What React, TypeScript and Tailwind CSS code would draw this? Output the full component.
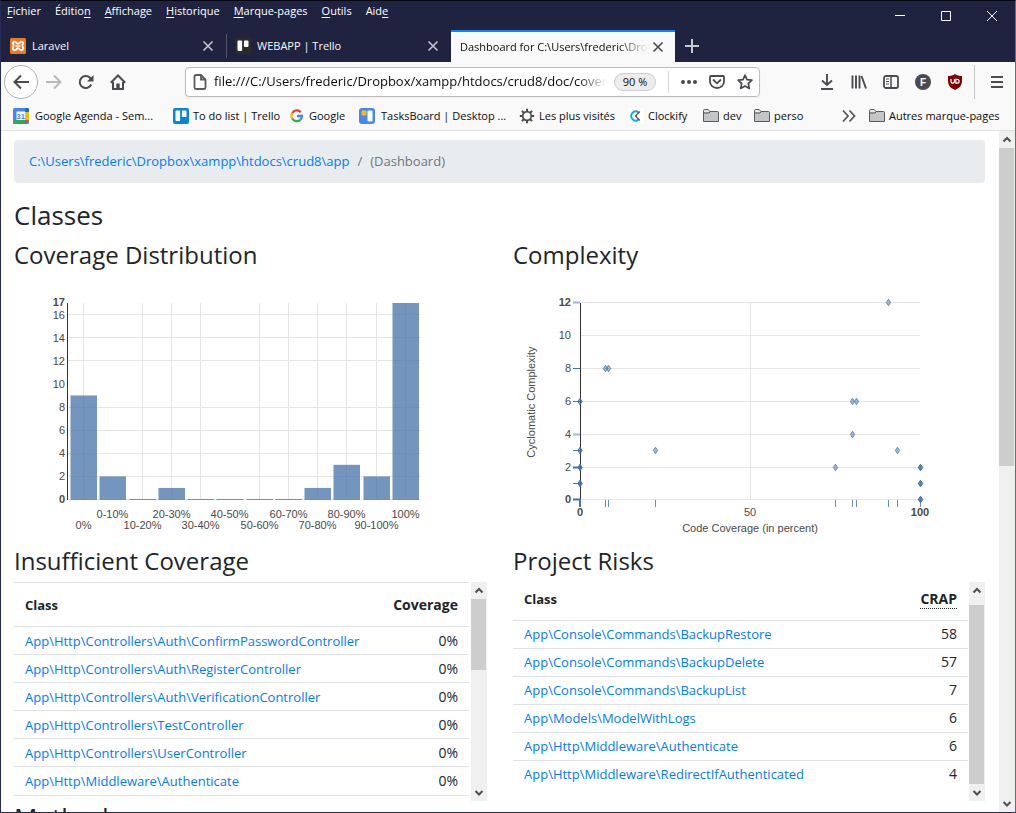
import React from "react";

const menus: [string, string, string][] = [
  ["", "F", "ichier"],
  ["Éditio", "n", ""],
  ["", "A", "ffichage"],
  ["", "H", "istorique"],
  ["", "M", "arque-pages"],
  ["", "O", "utils"],
  ["Aid", "e", ""],
];

function CloseIcon() {
  return (
    <svg className="h-3 w-3" viewBox="0 0 12 12" fill="none" stroke="currentColor" strokeWidth="1.6">
      <path d="M1.5 1.5 10.5 10.5M10.5 1.5 1.5 10.5" />
    </svg>
  );
}

function XamppIcon() {
  return (
    <svg className="h-4 w-4 shrink-0" viewBox="0 0 16 16">
      <rect width="16" height="16" rx="1.5" fill="#f37623" />
      <path
        d="M4.800 3.800C3 3.800 2.500 5 3.300 6.300c.6 1 .6 1.500 0 2.500C2.300 10.500 3 12.200 4.800 12.200c1.700 0 1.700-2 3.200-2s1.500 2 3.200 2c1.800 0 2.500-1.700 1.500-3.400-.6-1-.6-1.500 0-2.500.8-1.300.3-2.500-1.500-2.500C9.700 3.800 9.700 5.800 8 5.800S6.300 3.800 4.800 3.800z"
        fill="none"
        stroke="#fff"
        strokeWidth="1.900"
      />
      <path d="M5.500 8h5" stroke="#fff" strokeWidth="1.400" />
    </svg>
  );
}

function TrelloIcon({ dark = false }: { dark?: boolean }) {
  return (
    <svg className="h-4 w-4 shrink-0" viewBox="0 0 16 16">
      <rect width="16" height="16" rx="2" fill={dark ? "#2b2b2b" : "#0b86d4"} />
      <rect x="2.500" y="2.500" width="4.600" height="10.500" rx="1" fill="#fff" />
      <rect x="8.900" y="2.500" width="4.600" height="6.500" rx="1" fill="#fff" />
    </svg>
  );
}

function Folder() {
  return (
    <svg className="h-4 w-4 shrink-0" viewBox="0 0 16 16">
      <path d="M.5 13.500v-11a1 1 0 0 1 1-1h3.700l1.600 2h7.700a1 1 0 0 1 1 1v9z" fill="#c4c5c6" stroke="#5a5a5c" />
      <path d="M1 2h4l1.200 2H1z" fill="#e8e8e8" />
      <path d="M1 5h5l1.500-1.500" fill="none" stroke="#5a5a5c" />
    </svg>
  );
}

function AgendaIcon() {
  return (
    <svg className="h-4 w-4 shrink-0" viewBox="0 0 16 16">
      <rect width="16" height="16" rx="1.500" fill="#4285f4" />
      <path d="M12 0h2.500A1.500 1.500 0 0 1 16 1.500V4h-4z" fill="#1967d2" />
      <path d="M12 4h4v8h-4z" fill="#fbbc04" />
      <path d="M0 12h12v4H1.500A1.500 1.500 0 0 1 0 14.500z" fill="#34a853" />
      <path d="M12 12h4l-4 4z" fill="#ea4335" />
      <path d="M3.500 3.500h8.500V12H3.500z" fill="#fff" />
      <text x="7.700" y="10.600" textAnchor="middle" fontSize="7.500" fontWeight="700" fill="#4285f4" fontFamily="Liberation Sans, sans-serif">31</text>
    </svg>
  );
}

function GoogleIcon() {
  return (
    <svg className="h-4 w-4 shrink-0" viewBox="0 0 16 16" fill="none" strokeWidth="2.300">
      <path d="M3.300 5A5 5 0 0 1 11.700 4.300" stroke="#ea4335" />
      <path d="M3.300 10.500a5 5 0 0 1 0-5.500" stroke="#fbbc04" />
      <path d="M11.300 11.700a5 5 0 0 1-8-1.200" stroke="#34a853" />
      <path d="M8 8h5a5 5 0 0 1-1.700 3.700" stroke="#4285f4" />
    </svg>
  );
}

function TasksIcon() {
  return (
    <svg className="h-4 w-4 shrink-0" viewBox="0 0 16 16">
      <rect width="16" height="16" rx="3" fill="#4688f1" />
      <rect x="2.500" y="2.500" width="5" height="5" rx="1" fill="#fbbc04" />
      <rect x="8.500" y="2.500" width="5" height="11" rx="1" fill="#fff" />
    </svg>
  );
}

function GearIcon() {
  return (
    <svg className="h-4 w-4 shrink-0" viewBox="0 0 16 16" fill="none" stroke="#4c4c4e">
      <circle cx="8" cy="8" r="4.300" strokeWidth="1.700" />
      <path
        d="M8 3.500V.8M8 15.200v-2.700M3.500 8H.8M15.200 8h-2.700M4.800 4.800 2.900 2.900M13.100 13.100l-1.900-1.900M4.800 11.200l-1.900 1.900M13.100 2.900l-1.900 1.900"
        strokeWidth="2"
      />
    </svg>
  );
}

function ClockifyIcon() {
  return (
    <svg className="h-4 w-4 shrink-0" viewBox="0 0 16 16" fill="none">
      <rect width="16" height="16" fill="#fff" />
      <path d="M10.500 4.200A4.600 4.600 0 1 0 10.500 11.800" stroke="#03a9f4" strokeWidth="1.800" />
      <path d="m8.300 7.200 3.500-3.500M8.300 8.800l3.500 3.500" stroke="#333" strokeWidth="1.100" />
      <circle cx="8" cy="8" r="1" fill="#333" />
    </svg>
  );
}

const bookmarks: { label: string; icon: React.ReactNode; box: string }[] = [
  { label: "Google Agenda - Sem...", icon: <AgendaIcon />, box: "w-[160px] gap-[6px]" },
  { label: "To do list | Trello", icon: <TrelloIcon />, box: "w-[116px] gap-1" },
  { label: "Google", icon: <GoogleIcon />, box: "w-[70px] gap-1" },
  { label: "TasksBoard | Desktop ...", icon: <TasksIcon />, box: "w-[160px] gap-[6px]" },
  { label: "Les plus visités", icon: <GearIcon />, box: "w-[109px] gap-1" },
  { label: "Clockify", icon: <ClockifyIcon />, box: "w-[75px] gap-1" },
  { label: "dev", icon: <Folder />, box: "w-[51px] gap-1" },
  { label: "perso", icon: <Folder />, box: "w-[60px] gap-1" },
];

function TitleBar() {
  return (
    <div className="flex h-[29px] shrink-0 justify-between text-white">
      <nav className="flex h-5 items-center gap-[14px] pl-[6px]">
        {menus.map(([pre, key, post]) => (
          <button key={pre + key + post} className="whitespace-nowrap text-[11px] leading-4">
            {pre}
            <span className="underline underline-offset-2">{key}</span>
            {post}
          </button>
        ))}
      </nav>
      <div className="flex">
        <button aria-label="Réduire" className="flex w-[46px] items-center justify-center">
          <svg className="h-[10px] w-[10px]" viewBox="0 0 10 10"><path d="M0 4.500h10" stroke="#fff" /></svg>
        </button>
        <button aria-label="Agrandir" className="flex w-[46px] items-center justify-center">
          <svg className="h-[10px] w-[10px]" viewBox="0 0 10 10"><path d="M.5.5h9v9h-9z" fill="none" stroke="#fff" /></svg>
        </button>
        <button aria-label="Fermer" className="flex w-[46px] items-center justify-center">
          <svg className="h-[10px] w-[10px]" viewBox="0 0 10 10"><path d="m0 0 10 10M10 0 0 10" stroke="#fff" /></svg>
        </button>
      </div>
    </div>
  );
}

function TabStrip() {
  return (
    <div className="flex h-8 shrink-0 text-[11px] text-[#f9f9fa]">
      <div className="flex w-[225px] items-center gap-[6px] pl-[9px] pr-3">
        <XamppIcon />
        <span className="grow">Laravel</span>
        <button aria-label="Fermer l’onglet" className="text-[#c5c5cc]"><CloseIcon /></button>
      </div>
      <div className="my-1 w-px bg-[#55566e]" />
      <div className="flex w-[224px] items-center gap-[6px] pl-2 pr-3">
        <TrelloIcon dark />
        <span className="grow">WEBAPP | Trello</span>
        <button aria-label="Fermer l’onglet" className="text-[#c5c5cc]"><CloseIcon /></button>
      </div>
      <div className="flex w-[224px] items-center border-t-2 border-[#0a84ff] bg-[#f9f9fa] pl-[9px] pr-[11px] text-[#0c0c0d]">
        <span className="w-0 grow overflow-hidden whitespace-nowrap [mask-image:linear-gradient(to_right,black_85%,transparent)]">
          Dashboard for C:\Users\frederic\Dro
        </span>
        <button aria-label="Fermer l’onglet" className="ml-1 text-[#4a4a4f]"><CloseIcon /></button>
      </div>
      <button aria-label="Nouvel onglet" className="ml-[10px] text-[#c9c9d0]">
        <svg className="h-[14px] w-[14px]" viewBox="0 0 14 14" stroke="currentColor" strokeWidth="2"><path d="M7 0v14M0 7h14" /></svg>
      </button>
    </div>
  );
}

const ic = "h-4 w-4";

function NavBar() {
  return (
    <div className="flex h-10 shrink-0 items-center text-[#4a4a4f]">
      <button aria-label="Précédent" className="ml-[3px] flex h-[34px] w-[34px] items-center justify-center rounded-full border border-[#b1b1b3] bg-white">
        <svg className={ic} viewBox="0 0 16 16" fill="none" stroke="currentColor" strokeWidth="2"><path d="M16 8H1.500M8 1.500 1.500 8 8 14.500" /></svg>
      </button>
      <button aria-label="Suivant" className="ml-2 text-[#b9b9bb]">
        <svg className={ic} viewBox="0 0 16 16" fill="none" stroke="currentColor" strokeWidth="2"><path d="M0 8h14.500M8 1.500 14.500 8 8 14.500" /></svg>
      </button>
      <button aria-label="Actualiser" className="ml-4">
        <svg className={ic} viewBox="0 0 16 16" fill="none" stroke="currentColor" strokeWidth="2">
          <path d="M13.200 10.500A6 6 0 1 1 12 3.800L13.500 5.500" />
          <path d="M15.500 1v6.500H9z" fill="currentColor" stroke="none" />
        </svg>
      </button>
      <button aria-label="Accueil" className="ml-4">
        <svg className={ic} viewBox="0 0 16 16" fill="none" stroke="currentColor" strokeWidth="2">
          <path d="M.8 8.700 8 1.500l7.200 7.200" />
          <path d="M3 8v7h10V8" />
          <path d="M6.300 15V9.500h3.400V15z" fill="currentColor" stroke="none" />
        </svg>
      </button>
      <div className="ml-[59px] flex h-[30px] min-w-0 grow items-center rounded-sm border border-[#bdbdbf] bg-white pl-[6px] shadow-xs">
        <svg className="h-4 w-4 shrink-0" viewBox="0 0 16 16" fill="none" stroke="#5a5a5e" strokeWidth="1.800">
          <path d="M9 1H4a1.500 1.500 0 0 0-1.500 1.500v11A1.500 1.500 0 0 0 4 15h8a1.500 1.500 0 0 0 1.500-1.500v-8z" />
          <path d="M9 1v4.500h4.500" />
        </svg>
        <input
          aria-label="Adresse"
          className="ml-[6px] w-0 grow bg-transparent text-[13px] text-[#0c0c0d] outline-none [mask-image:linear-gradient(to_right,black_93%,transparent)]"
          defaultValue="file:///C:/Users/frederic/Dropbox/xampp/htdocs/crud8/doc/coverage/dashboard.html"
        />
        <button className="ml-2 h-[18px] w-[42px] shrink-0 rounded-full border border-[#cfcfd1] bg-[#ededf0] text-[11px] leading-4 text-[#0c0c0d]">90 %</button>
        <div className="ml-3 h-[22px] w-px bg-[#d7d7db]" />
        <button aria-label="Actions" className="ml-3">
          <svg className={ic} viewBox="0 0 16 16" fill="currentColor"><circle cx="2" cy="8" r="2" /><circle cx="8" cy="8" r="2" /><circle cx="14" cy="8" r="2" /></svg>
        </button>
        <button aria-label="Pocket" className="ml-3">
          <svg className={ic} viewBox="0 0 16 16" fill="none" stroke="currentColor" strokeWidth="1.800">
            <path d="M2 2h12a1 1 0 0 1 1 1v4.500a7 6.500 0 0 1-14 0V3a1 1 0 0 1 1-1z" />
            <path d="m4.500 6 3.500 3.300L11.500 6" strokeLinecap="round" />
          </svg>
        </button>
        <button aria-label="Marquer cette page" className="ml-3 mr-[6px]">
          <svg className={ic} viewBox="0 0 16 16" fill="none" stroke="currentColor" strokeWidth="1.700" strokeLinejoin="round">
            <path d="m8 1.200 2 4.500 4.900.5-3.600 3.300 1 4.900L8 11.900l-4.300 2.500 1-4.900L1.100 6.200 6 5.700z" />
          </svg>
        </button>
      </div>
      <button aria-label="Téléchargements" className="ml-[59px]">
        <svg className={ic} viewBox="0 0 16 16" fill="none" stroke="currentColor" strokeWidth="1.900"><path d="M8 0v11M3 6.500 8 11l5-4.500M2 15h12" /></svg>
      </button>
      <button aria-label="Bibliothèque" className="ml-4">
        <svg className={ic} viewBox="0 0 16 16" fill="none" stroke="currentColor" strokeWidth="1.900"><path d="M1.500 1.500v13M5 1.500v13M8.500 1.500v13M10.500 2l4.500 12.500" /></svg>
      </button>
      <button aria-label="Panneaux latéraux" className="ml-4">
        <svg className={ic} viewBox="0 0 16 16" fill="none" stroke="currentColor" strokeWidth="1.800">
          <rect x="1" y="2" width="14" height="12" rx="2" />
          <path d="M8 2v12" strokeWidth="1.500" />
          <path d="M3 5h3M3 7.500h3M3 10h3" strokeWidth="1" />
        </svg>
      </button>
      <button aria-label="Compte" className="ml-4">
        <svg className={ic} viewBox="0 0 16 16">
          <circle cx="8" cy="8" r="8" fill="currentColor" />
          <text x="8" y="11.700" textAnchor="middle" fontSize="10" fontWeight="700" fill="#fff" fontFamily="Liberation Sans, sans-serif">F</text>
        </svg>
      </button>
      <button aria-label="uBlock Origin" className="ml-4">
        <svg className={ic} viewBox="0 0 16 16">
          <path d="M8 0c2 1.500 4.500 2 7 2v5c0 4.500-3 7.500-7 9-4-1.500-7-4.500-7-9V2c2.500 0 5-.5 7-2z" fill="#800000" />
          <path d="M4 5v2.500a1.700 1.700 0 0 0 3.400 0V5" fill="none" stroke="#fff" strokeWidth="1.200" />
          <path d="M8.800 5.300v3.800h1.400a1.900 1.900 0 0 0 0-3.800z" fill="none" stroke="#fff" strokeWidth="1.200" />
        </svg>
      </button>
      <div className="ml-[11px] h-[34px] w-px bg-[#c4c4c6]" />
      <button aria-label="Menu" className="ml-[14px] mr-[10px]">
        <svg className={ic} viewBox="0 0 16 16" stroke="currentColor" strokeWidth="2"><path d="M2 3h12M2 8h12M2 13h12" /></svg>
      </button>
    </div>
  );
}

function BookmarksBar() {
  return (
    <div className="flex h-[28px] shrink-0 items-center pl-3 text-[11px] text-[#0c0c0d]">
      {bookmarks.map((b) => (
        <a key={b.label} href="#" className={"flex items-center whitespace-nowrap " + b.box}>
          {b.icon}
          <span>{b.label}</span>
        </a>
      ))}
      <button aria-label="Afficher plus" className="ml-auto">
        <svg className={ic} viewBox="0 0 16 16" fill="none" stroke="#5a5a5e" strokeWidth="1.800"><path d="m2 2.500 5 5.500-5 5.500M8.500 2.500l5 5.500-5 5.500" /></svg>
      </button>
      <a href="#" className="ml-3 flex w-[134px] items-center gap-1 whitespace-nowrap">
        <Folder />
        <span>Autres marque-pages</span>
      </a>
      <div className="w-3" />
    </div>
  );
}

function Arrow({ down = false }: { down?: boolean }) {
  return (
    <svg className="h-[17px] w-4 shrink-0" viewBox="0 0 16 17" fill="none" stroke="#505050" strokeWidth="2">
      <path d={down ? "m4.500 7 3.500 3.500L11.500 7" : "M4.500 10.500 8 7l3.500 3.500"} />
    </svg>
  );
}

function ScrollBar({ thumb }: { thumb: string }) {
  return (
    <div className="flex w-4 shrink-0 flex-col bg-[#f0f0f0]">
      <Arrow />
      <div className={"mr-px bg-[#cdcdcd] " + thumb} />
      <div className="mt-auto h-[17px]"><Arrow down /></div>
    </div>
  );
}

const bins: [string, number][] = [
  ["0%", 9], ["0-10%", 2], ["10-20%", 0], ["20-30%", 1], ["30-40%", 0], ["40-50%", 0],
  ["50-60%", 0], ["60-70%", 0], ["70-80%", 1], ["80-90%", 3], ["90-100%", 2], ["100%", 17],
];

function DistributionChart() {
  const y = (v: number) => 499.5 - v * 11.56;
  const x = (i: number) => Math.floor(83.5 + i * 29.27) + 0.5;
  const rows = [0, 2, 4, 6, 8, 12, 14, 16];
  return (
    <svg className="mt-[2px] h-[274px] w-full" viewBox="14 272 473 274" preserveAspectRatio="xMinYMin meet" fontFamily="Liberation Sans, Arial, sans-serif" fontSize="11" fill="#4a4a4a">
      <g stroke="#e5e5e5">
        {rows.map((v) => <path key={v} d={`M68 ${Math.floor(y(v)) + 0.5}H421`} />)}
        {bins.map((_, i) => (i === 1 || i === 5 ? null : <path key={i} d={`M${x(i)} 303V499`} />))}
      </g>
      <path d="M67.500 303V500" stroke="#333" />
      {bins.map(([label, v], i) => (
        <g key={label}>
          <rect x={x(i) - 13} y={v ? y(v) : 499} width="26.500" height={v ? v * 11.56 + 0.5 : 1} fill="#4572a7" fillOpacity="0.750" />
          <text x={x(i)} y={i % 2 ? 518 : 529} textAnchor="middle">{label}</text>
        </g>
      ))}
      <g textAnchor="end">
        {[2, 4, 6, 8, 10, 12, 14, 16].map((v) => <text key={v} x="65" y={Math.round(y(v)) + 4}>{v}</text>)}
        <text x="65" y="503" fontWeight="700">0</text>
        <text x="65" y="306" fontWeight="700">17</text>
      </g>
    </svg>
  );
}

const points: [number, number, number][] = [
  [888.5, 12, 0.6], [605.5, 8, 0.6], [608.5, 8, 0.6], [580, 6, 0.8], [852.5, 6, 0.6], [856.5, 6, 0.6],
  [852.5, 4, 0.6], [580, 3, 0.8], [655.5, 3, 0.6], [897.5, 3, 0.6], [580, 2, 1], [835.5, 2, 0.6],
  [920.5, 2, 1], [580, 1, 1], [920.5, 1, 1], [920.5, 0, 1],
];

function ComplexityChart() {
  const y = (v: number) => Math.floor(499.85 - v * 16.41) + 0.5;
  const leftTicks: [number, number, number][] = [[12, 0.5, 2], [8, 1, 1], [6, 1, 1], [4, 0.5, 2], [3, 1, 1], [2, 1, 2], [1, 1, 1], [0, 1, 2]];
  const bottomTicks = [605.5, 608.5, 655.5, 835.5, 852.5, 856.5, 888.5, 897.5, 920.5];
  return (
    <svg className="mt-[2px] h-[274px] w-full" viewBox="513 272 472 274" preserveAspectRatio="xMinYMin meet" fontFamily="Liberation Sans, Arial, sans-serif" fontSize="11" fill="#4a4a4a">
      <g stroke="#e5e5e5">
        {[0, 2, 4, 6, 8, 10, 12].map((v) => <path key={v} d={`M580 ${y(v)}H920`} />)}
        <path d="M750.500 302V499" />
      </g>
      <path d="M580.500 303V500" stroke="#333" />
      <g stroke="#4572a7">
        {leftTicks.map(([v, o, w]) => <path key={v} d={`M573 ${y(v)}h7`} strokeOpacity={o} strokeWidth={w} />)}
        {bottomTicks.map((v) => <path key={v} d={`M${v} 500v7`} strokeOpacity={0.8} />)}
        <path d="M580 499v8" strokeWidth="2" />
        {points.map(([px, v, o]) => (
          <path key={`${px}-${v}`} d={`M${px} ${y(v) - 3.3}l2.200 3.300-2.200 3.300-2.200-3.300z`} fill="#4572a7" fillOpacity={o - 0.1} strokeOpacity={o + 0.1} />
        ))}
      </g>
      <g textAnchor="end">
        {[2, 4, 6, 8, 10].map((v) => <text key={v} x="571" y={y(v) + 3.5}>{v}</text>)}
        <text x="571" y="503" fontWeight="700">0</text>
        <text x="571" y="306" fontWeight="700">12</text>
      </g>
      <g textAnchor="middle">
        <text x="580" y="516" fontWeight="700">0</text>
        <text x="750" y="516">50</text>
        <text x="920" y="516" fontWeight="700">100</text>
        <text x="750" y="532">Code Coverage (in percent)</text>
        <text transform="translate(535 402) rotate(-90)">Cyclomatic Complexity</text>
      </g>
    </svg>
  );
}

function DataTable({ head, value, rows, headClass }: { head: string; value: React.ReactNode; rows: [string, string][]; headClass: string }) {
  return (
    <table className="w-full text-[14px] leading-5">
      <thead>
        <tr className={headClass}>
          <th className="pl-[11px] text-left text-[13px]">{head}</th>
          <th className="pr-[11px] text-right">{value}</th>
        </tr>
      </thead>
      <tbody>
        {rows.map(([name, v]) => (
          <tr key={name} className="h-7 border-t border-[#dee2e6]">
            <td className="pl-[11px] text-[13px]"><a href="#" className="text-[#007bff]">{name}</a></td>
            <td className="pr-[11px] text-right">{v}</td>
          </tr>
        ))}
      </tbody>
    </table>
  );
}

const coverageRows: [string, string][] = [
  ["App\\Http\\Controllers\\Auth\\ConfirmPasswordController", "0%"],
  ["App\\Http\\Controllers\\Auth\\RegisterController", "0%"],
  ["App\\Http\\Controllers\\Auth\\VerificationController", "0%"],
  ["App\\Http\\Controllers\\TestController", "0%"],
  ["App\\Http\\Controllers\\UserController", "0%"],
  ["App\\Http\\Middleware\\Authenticate", "0%"],
];

const riskRows: [string, string][] = [
  ["App\\Console\\Commands\\BackupRestore", "58"],
  ["App\\Console\\Commands\\BackupDelete", "57"],
  ["App\\Console\\Commands\\BackupList", "7"],
  ["App\\Models\\ModelWithLogs", "6"],
  ["App\\Http\\Middleware\\Authenticate", "6"],
  ["App\\Http\\Middleware\\RedirectIfAuthenticated", "4"],
];

const h2 = "text-[26px] leading-[28px]";
const h3 = "text-[24px] leading-[30px]";

function Page() {
  return (
    <main className="min-w-0 grow overflow-hidden pl-[13px] pr-[14px] pt-[9px] text-[#212529]">
      <nav className="flex h-[43px] items-center gap-2 rounded bg-[#e9ecef] px-[15px] text-[13px] text-[#6c757d]">
        <a href="#" className="text-[#007bff]">C:\Users\frederic\Dropbox\xampp\htdocs\crud8\app</a>
        <span>/</span>
        <span>(Dashboard)</span>
      </nav>
      <h2 className={h2 + " mt-[18px]"}>Classes</h2>
      <div className="mt-[11px] grid grid-cols-[minmax(0,473fr)_minmax(0,472fr)] gap-x-[26px]">
        <section>
          <h3 className={h3}>Coverage Distribution</h3>
          <DistributionChart />
        </section>
        <section>
          <h3 className={h3}>Complexity</h3>
          <ComplexityChart />
        </section>
        <section>
          <h3 className={h3}>Insufficient Coverage</h3>
          <div className="mt-[6px] flex h-[219px] justify-between">
            <div className="mr-[2px] grow">
              <DataTable head="Class" value="Coverage" rows={coverageRows} headClass="h-[44px] border-t border-[#dee2e6]" />
              <div className="border-t border-[#dee2e6]" />
            </div>
            <ScrollBar thumb="h-[71px]" />
          </div>
        </section>
        <section>
          <h3 className={h3}>Project Risks</h3>
          <div className="mt-[6px] flex h-[219px]">
            <div className="mr-px grow">
              <DataTable
                head="Class"
                value={<abbr title="Change Risk Anti-Patterns (CRAP) Index" className="border-b border-dotted border-[#212529] no-underline">CRAP</abbr>}
                rows={riskRows}
                headClass="h-[38px] [&>th]:pb-1"
              />
            </div>
            <ScrollBar thumb="mt-[6px] h-[179px]" />
          </div>
        </section>
      </div>
      <h2 className={h2 + " mt-[2px]"}>Methods</h2>
    </main>
  );
}

export default function App() {
  return (
    <div className="flex h-screen flex-col overflow-hidden border border-t-[#05060f] border-r-[#6b6b73] border-b-[#262b55] border-l-[#262b55] bg-[#20233f] font-['Open_Sans','Noto_Sans',sans-serif]">
      <TitleBar />
      <TabStrip />
      <div className="flex shrink-0 flex-col border-b border-[#e0e0e1] bg-[#f9f9fa]">
        <NavBar />
        <BookmarksBar />
      </div>
      <div className="flex min-h-0 grow bg-white">
        <Page />
        <ScrollBar thumb="h-[318px]" />
      </div>
    </div>
  );
}
